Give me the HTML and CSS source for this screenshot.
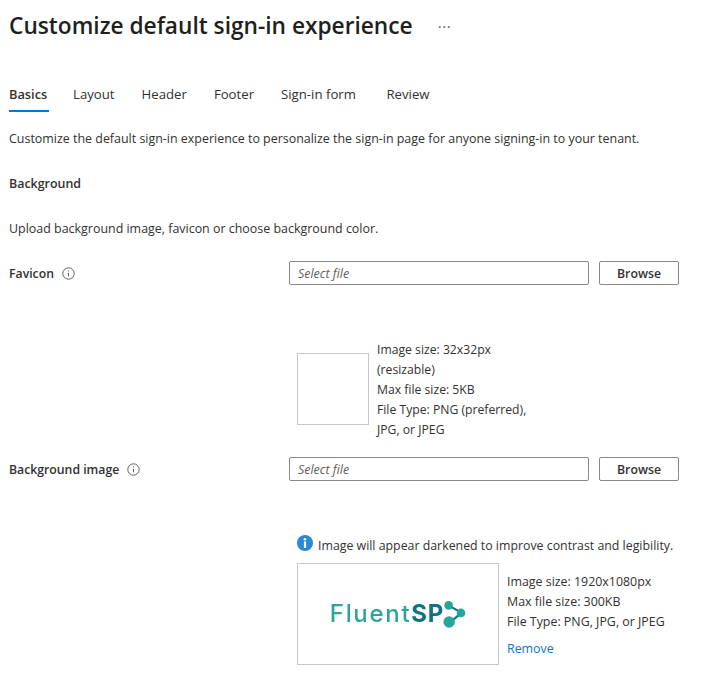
FILE: index.html
```html
<!DOCTYPE html>
<html lang="en">
<head>
<meta charset="utf-8">
<title>Customize default sign-in experience</title>
<link rel="stylesheet" href="styles.css">
</head>
<body>
<main class="page">
  <header class="title-row">
    <h1 class="title">Customize default sign-in experience</h1>
    <span class="more">···</span>
  </header>
  <nav class="tabs">
    <span class="tab active">Basics</span>
    <span class="tab">Layout</span>
    <span class="tab">Header</span>
    <span class="tab">Footer</span>
    <span class="tab wide-gap">Sign-in form</span>
    <span class="tab">Review</span>
  </nav>
  <p class="intro">Customize the default sign-in experience to personalize the sign-in page for anyone signing-in to your tenant.</p>
  <h2 class="section">Background</h2>
  <p class="upload">Upload background image, favicon or choose background color.</p>

  <div class="row">
    <div class="label">Favicon
      <svg class="info" viewBox="0 0 13 13"><circle cx="6.5" cy="6.5" r="5.7"/><path d="M6.5 5.8v3.6M6.5 3.5v1"/></svg>
    </div>
    <div class="field">
      <div class="input">Select file</div>
      <button class="browse">Browse</button>
    </div>
  </div>
  <div class="preview-fav">
    <div class="box-fav"></div>
    <div class="meta meta-fav">Image size: 32x32px (resizable)<br>Max file size: 5KB<br>File Type: PNG (preferred), JPG, or JPEG</div>
  </div>

  <div class="row">
    <div class="label">Background image
      <svg class="info" viewBox="0 0 13 13"><circle cx="6.5" cy="6.5" r="5.7"/><path d="M6.5 5.8v3.6M6.5 3.5v1"/></svg>
    </div>
    <div class="field">
      <div class="input">Select file</div>
      <button class="browse">Browse</button>
    </div>
  </div>
  <div class="notice">
    <svg class="notice-icon" viewBox="0 0 16 16"><circle cx="8" cy="8" r="8" fill="#2b88d8"/><circle cx="8" cy="4.2" r="1.3" fill="#fff"/><rect x="6.9" y="6.5" width="2.2" height="6.5" fill="#fff"/></svg>
    <span>Image will appear darkened to improve contrast and legibility.</span>
  </div>
  <div class="preview-bg">
    <div class="box-bg">
      <div class="logo"><span class="logo-a">Fluent</span><span class="logo-b">SP</span>
        <svg class="logo-mark" viewBox="0 0 22 26"><path d="M6 5l12 7-11 9" fill="none" stroke="#0f7480" stroke-width="2"/><circle cx="6" cy="5" r="4" fill="#26a69a"/><circle cx="17.5" cy="12" r="4" fill="#26a69a"/><circle cx="6.5" cy="20.5" r="5.3" fill="#26a69a"/></svg>
      </div>
    </div>
    <div class="meta meta-bg">
      <div>Image size: 1920x1080px</div>
      <div>Max file size: 300KB</div>
      <div>File Type: PNG, JPG, or JPEG</div>
      <a class="remove" href="#">Remove</a>
    </div>
  </div>
</main>
</body>
</html>
```
FILE: styles.css
```css
* { box-sizing: border-box; }
html, body { margin: 0; padding: 0; background: #fff; }
body {
  font-family: "Open Sans", "Noto Sans", "Liberation Sans", sans-serif;
  font-size: 12.45px;
  line-height: 20px;
  color: #323130;
  overflow: hidden;
  height: 679px;
}
.page { padding: 0 0 0 9px; }
.title-row { display: flex; align-items: center; height: 52px; }
.title { margin: 0; font-size: 22.7px; font-weight: 600; line-height: 52px; color: #201f1e; }
.more { margin-left: 25px; font-size: 15px; letter-spacing: 0.6px; color: #605e5c; }
.tabs { display: flex; margin-top: 30px; height: 30px; }
.tab { height: 30px; line-height: 25px; font-size: 13.2px; color: #323130; margin-right: 27px; white-space: nowrap; }
.tab.active { font-size: 12.8px; font-weight: 600; border-bottom: 2px solid #0078d4; width: 40px; margin-right: 24px; }
.tab.wide-gap { margin-right: 30.5px; }
.intro { margin: 17px 0 0; height: 20px; }
.section { margin: 24px 0 0; padding-top: 1px; height: 20px; font-size: 12.45px; font-weight: 600; line-height: 20px; }
.upload { margin: 25px 0 0; padding-top: 1px; height: 20px; }
.row { display: flex; align-items: center; height: 24px; }
.upload + .row { margin-top: 23px; }
.label { width: 280px; font-size: 12.25px; font-weight: 600; display: flex; align-items: center; gap: 8px; padding-top: 1px; }
.info { width: 13px; height: 13px; fill: none; stroke: #605e5c; stroke-width: 1; margin-top: -1px; }
.field { display: flex; gap: 10px; }
.input {
  width: 300px; height: 24px; padding: 1px 0 0 8px;
  border: 1px solid #8a8886; border-radius: 2px;
  font-style: italic; color: #605e5c; line-height: 21px;
}
.browse {
  width: 80px; height: 24px; padding: 1px 0 0;
  border: 1px solid #8a8886; border-radius: 2px; background: #fff;
  font: 600 12.3px/20px "Open Sans", "Noto Sans", sans-serif; color: #323130;
}
.preview-fav { display: flex; margin: 55px 0 17px 288px; height: 100px; }
.box-fav { width: 72px; height: 72px; margin-top: 13px; border: 1px solid #c8c6c4; }
.meta { color: #323130; }
.meta-fav { width: 160px; margin-left: 8px; font-size: 12.2px; }
.notice { display: flex; align-items: center; gap: 5px; margin: 52px 0 0 288px; height: 22px; font-size: 12.35px; }
.notice span { padding-top: 3px; }
.notice-icon { width: 16px; height: 16px; margin-top: -3px; }
.preview-bg { display: flex; margin: 8px 0 0 288px; }
.box-bg {
  width: 202px; height: 102px; border: 1px solid #c8c6c4;
  display: flex; align-items: center; justify-content: center;
}
.logo { display: flex; align-items: center; font-family: Inter, "Open Sans", sans-serif; font-size: 24px; line-height: 30px; letter-spacing: 1.7px; filter: blur(0.35px); }
.logo-a { color: #2fa39a; font-weight: 500; }
.logo-b { color: #0f7480; font-weight: 700; letter-spacing: 0.8px; }
.logo-mark { width: 24px; height: 28px; margin-left: -2px; }
.meta-bg { margin-left: 8px; padding-top: 9px; font-size: 12.4px; }
.remove { display: block; margin-top: 7px; color: #0078d4; text-decoration: none; }
```
